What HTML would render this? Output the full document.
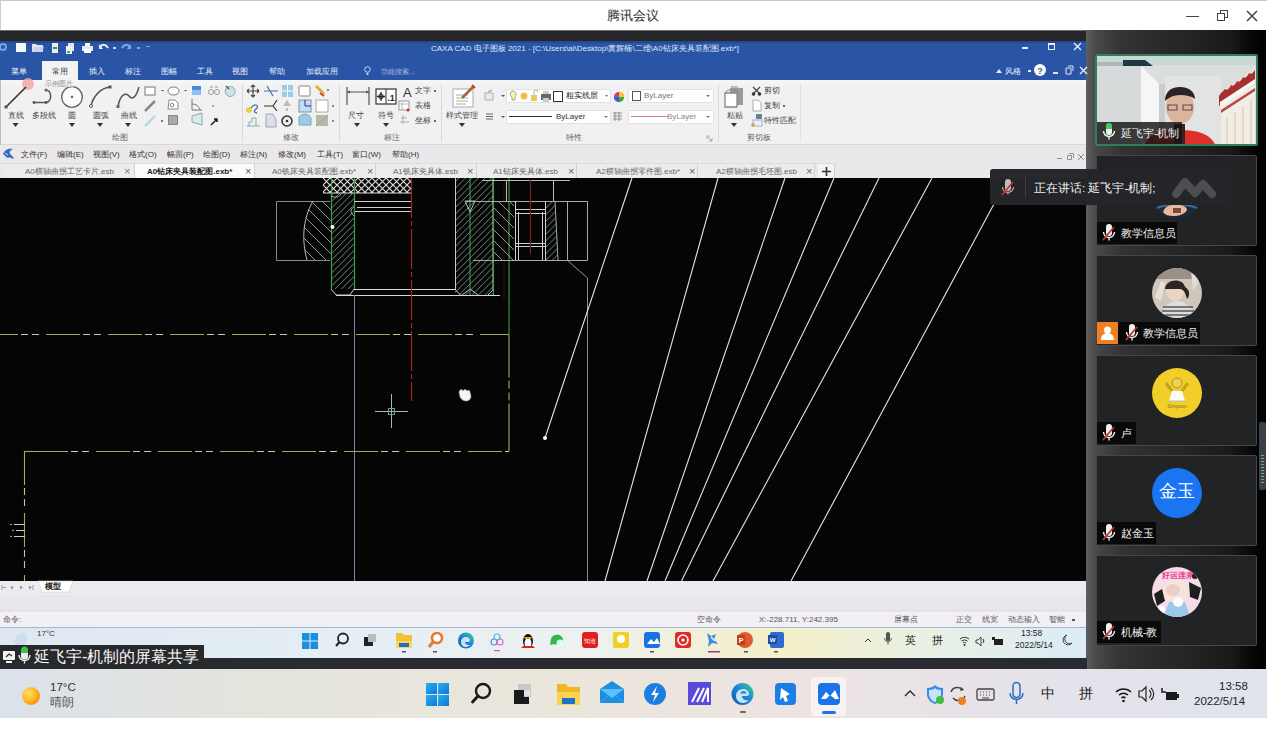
<!DOCTYPE html>
<html><head><meta charset="utf-8">
<style>
*{margin:0;padding:0;box-sizing:border-box}
html,body{width:1267px;height:729px;overflow:hidden;background:#fff;font-family:"Liberation Sans",sans-serif;position:relative}
.a{position:absolute}
.t{position:absolute;white-space:nowrap;line-height:1}
svg{position:absolute;overflow:visible}
#title{left:0;top:0;width:1267px;height:30px;background:#fff;border-top:1px solid #c8c8c8;border-left:1px solid #cfcfcf}
#darkbar{left:0;top:30px;width:1087px;height:11px;background:#262628;border-top:1px solid #6a6a6a}
#rpanel{left:1086px;top:30px;width:180px;height:639px;background:linear-gradient(90deg,#5e5e5e 0,#4a4a4a 5%,#333 20%,#272727 50%,#1a1a1a 80%,#060606 93%,#000 100%)}
#cad{left:0;top:41px;width:1086px;height:617px;background:#f1f1f1;overflow:hidden}
#cadtitle{left:0;top:0;width:1086px;height:39px;background:#2a55a6}
#ribbon{left:0;top:39px;width:1086px;height:65px;background:linear-gradient(180deg,#f7f8f8 0,#f1f1f1 6px,#f1f1f2 100%);border-bottom:1px solid #d8d8d8}
#menubar{left:0;top:104px;width:1086px;height:18px;background:#ebe8eb}
#doctabs{left:0;top:122px;width:1086px;height:15px;background:#ebe8eb}
#draw{left:0;top:137px;width:1086px;height:403px;background:#050505}
#modelbar{left:0;top:540px;width:1086px;height:14px;background:#ecebef}
#graybar{left:0;top:554px;width:1086px;height:17px;background:#e9e6ec}
#cmdline{left:0;top:571px;width:1086px;height:16px;background:#f2eff5;border-bottom:1px solid #9fbad3}
#smalltask{left:0;top:587px;width:1086px;height:30px;background:linear-gradient(90deg,#dde8f0 0,#e6eff6 35%,#eef1ee 55%,#f4efc8 72%,#e9f1e4 85%,#dcecf6 100%)}
#sharebar{left:0;top:658px;width:1087px;height:11px;background:#2a2b30}
#task{left:0;top:669px;width:1267px;height:49px;background:linear-gradient(90deg,#dbe2ea 0,#e4e4dc 20%,#ebe6dc 45%,#ede4e2 62%,#e6e2ea 80%,#dfe4ec 100%)}
.rt{font-size:8px;color:#444}
.wt{font-size:8px;color:#e8eefc}
.mt{font-size:8px;color:#333}
.tab{position:absolute;top:1px;height:14px;background:#ececec;border-right:1px solid #d0d0d0}
.tile{position:absolute;left:11px;width:161px;height:91px;background:#212325;border:1px solid #44474a;border-radius:2px}
.lab{position:absolute;left:0;bottom:0;height:22px;background:rgba(8,8,8,.9)}
.labt{position:absolute;top:5px;font-size:10.5px;color:#f0f0f0;white-space:nowrap;line-height:1}
</style></head><body>
<!-- Tencent meeting title -->
<div id="title" class="a">
  <div class="t" style="left:606px;top:8px;font-size:13px;color:#2b2b2b">腾讯会议</div>
  <div class="a" style="left:1185px;top:14.5px;width:13px;height:1.5px;background:#444"></div>
  <div class="a" style="left:1219px;top:9px;width:8px;height:8px;border:1.5px solid #444"></div>
  <div class="a" style="left:1216px;top:12px;width:8px;height:8px;border:1.5px solid #444;background:#fff"></div>
  <svg style="left:1246px;top:10px" width="10" height="10"><path d="M0 0L10 10M10 0L0 10" stroke="#444" stroke-width="1.5"/></svg>
</div>
<div id="darkbar" class="a"></div>
<div id="rpanel" class="a"></div>

<div id="cad" class="a">
  <div id="cadtitle" class="a"></div>
  <div id="ribbon" class="a"></div>
  <div id="menubar" class="a"></div>
  <div id="doctabs" class="a"></div>
  <div id="draw" class="a"></div>
  <div id="modelbar" class="a"></div>
  <div id="graybar" class="a"></div>
  <div id="cmdline" class="a"></div>
  <div id="smalltask" class="a"></div>
</div>
<div id="sharebar" class="a"></div>
<div id="task" class="a"></div>
<!-- CAD title bar -->
<div class="a" style="left:0;top:41px;width:1086px;height:2px;background:#24498f"></div>
<svg style="left:0;top:42px" width="10" height="10"><circle cx="3" cy="5" r="4" fill="#6aa8e8"/><circle cx="3" cy="5" r="2" fill="#2a55a6"/></svg>
<div class="a" style="left:16px;top:43px;width:10px;height:9px;background:#f4f6fa"></div>
<svg style="left:32px;top:43px" width="12" height="10"><path d="M0 1h4l1 1h6v7H0z" fill="#dfe6f2"/><path d="M2 4h10l-2 5H0z" fill="#c6d3ea"/></svg>
<div class="a" style="left:52px;top:43px;width:6px;height:10px;background:#e8eef8"></div>
<div class="a" style="left:53px;top:47px;width:4px;height:2px;background:#4a8a4a"></div>
<svg style="left:66px;top:43px" width="10" height="11"><path d="M2 0h6v8H2z" fill="#dfe6f2"/><path d="M0 3h6v8H0z" fill="#f0f4fa"/><path d="M1 8h3v2H1z" fill="#58a058"/></svg>
<svg style="left:82px;top:43px" width="11" height="10"><path d="M3 0h5v3H3z" fill="#f4f6fa"/><path d="M0 3h11v5H0z" fill="#e4eaf4"/><path d="M2 6h7v4H2z" fill="#fff"/></svg>
<svg style="left:99px;top:43px" width="10" height="9"><path d="M1 4C3 1 7 1 9 5" stroke="#e8eef8" stroke-width="2" fill="none"/><path d="M0 1v5h4z" fill="#e8eef8"/></svg>
<div class="a" style="left:113px;top:47px;width:3px;height:2px;background:#c8d4ea"></div>
<svg style="left:121px;top:43px" width="10" height="9"><path d="M9 4C7 1 3 1 1 5" stroke="#8ea6d4" stroke-width="2" fill="none"/><path d="M10 1v5H6z" fill="#8ea6d4"/></svg>
<div class="a" style="left:137px;top:47px;width:3px;height:2px;background:#8ea6d4"></div>
<div class="a" style="left:146px;top:46px;width:4px;height:1px;background:#8ea6d4"></div>
<div class="t wt" style="left:431px;top:45px;font-size:8px;color:#dfe7f6">CAXA CAD 电子图板 2021 - [C:\Users\ai\Desktop\黄辉楠\二维\A0钻床夹具装配图.exb*]</div>
<div class="a" style="left:1022px;top:47px;width:6px;height:2px;background:#e8eef8"></div>
<div class="a" style="left:1048px;top:43px;width:7px;height:7px;border:1px solid #e8eef8;border-top-width:2px"></div>
<svg style="left:1074px;top:43px" width="7" height="7"><path d="M0 0L7 7M7 0L0 7" stroke="#e8eef8" stroke-width="1.4"/></svg>
<!-- ribbon tabs -->
<div class="a" style="left:42px;top:61px;width:36px;height:19px;background:#f3f3f3"></div>
<div class="t wt" style="left:11px;top:68px">菜单</div>
<div class="t" style="left:52px;top:68px;font-size:8px;color:#3c3c3c">常用</div>
<div class="t wt" style="left:89px;top:68px">插入</div>
<div class="t wt" style="left:125px;top:68px">标注</div>
<div class="t wt" style="left:161px;top:68px">图幅</div>
<div class="t wt" style="left:197px;top:68px">工具</div>
<div class="t wt" style="left:232px;top:68px">视图</div>
<div class="t wt" style="left:269px;top:68px">帮助</div>
<div class="t wt" style="left:306px;top:68px">加载应用</div>
<svg style="left:364px;top:66px" width="7" height="10"><circle cx="3.5" cy="3.5" r="2.8" stroke="#c8d4ea" stroke-width="1" fill="none"/><path d="M2.5 7h2v2h-2z" fill="#c8d4ea"/></svg>
<div class="t" style="left:381px;top:68px;font-size:7px;color:#a9badd">功能搜索...</div>
<svg style="left:996px;top:69px" width="6" height="4"><path d="M0 4L3 0L6 4z" fill="#e8eef8"/></svg>
<div class="t wt" style="left:1005px;top:68px">风格</div>
<div class="a" style="left:1028px;top:70px;width:3px;height:2px;background:#e8eef8"></div>
<svg style="left:1034px;top:64px" width="12" height="12"><circle cx="6" cy="6" r="6" fill="#fafafa"/><text x="6" y="9.5" font-size="9" font-weight="bold" text-anchor="middle" fill="#5a5a5a" font-family="Liberation Sans">?</text></svg>
<div class="a" style="left:1053px;top:72px;width:5px;height:2px;background:#e0e8f6"></div>
<svg style="left:1066px;top:66px" width="7" height="8"><path d="M2 0h5v5M0 2h5v6H0z" stroke="#e0e8f6" stroke-width="1" fill="none"/></svg>
<svg style="left:1080px;top:67px" width="7" height="7"><path d="M0 0L7 7M7 0L0 7" stroke="#e8eef8" stroke-width="1.4"/></svg>
<!-- ribbon -->
<div class="a" style="left:0;top:80px;width:1px;height:65px;background:#bdbdbd"></div>
<!-- drawing big tools -->
<svg style="left:0;top:78px" width="140" height="35">
 <circle cx="28" cy="6" r="6" fill="#f4a8a8" opacity=".85"/>
 <path d="M6 29L26 9" stroke="#333" stroke-width="1.6"/><rect x="4.5" y="27.5" width="3" height="3" fill="#555"/>
 <path d="M33 24.5H47M47 24.5C52 22 52 13 46 12" stroke="#555" stroke-width="1.5" fill="none"/><circle cx="34" cy="24.5" r="1.4" fill="#555"/><circle cx="46" cy="24.5" r="1.4" fill="#555"/><circle cx="46" cy="12" r="1.6" fill="#666"/>
 <circle cx="72" cy="19" r="10.3" stroke="#666" stroke-width="1.3" fill="#fafafa"/><circle cx="72" cy="19" r="1.2" fill="#666"/>
 <path d="M91 28C93 18 101 10 110 9" stroke="#555" stroke-width="1.5" fill="none"/><circle cx="91" cy="28" r="1.5" stroke="#555" fill="#fff"/><rect x="108.5" y="7.5" width="3" height="3" fill="#555"/>
 <path d="M118 29C120 16 126 14 129 18C132 22 136 20 139 9" stroke="#555" stroke-width="1.5" fill="none"/><rect x="116.5" y="27" width="3" height="3" fill="#666"/>
</svg>
<div class="t" style="left:45px;top:80px;font-size:7px;color:#888;background:rgba(245,245,245,.7)">示例图片</div>
<div class="t rt" style="left:8px;top:112px">直线</div>
<div class="t rt" style="left:32px;top:112px">多段线</div>
<div class="t rt" style="left:68px;top:112px">圆</div>
<div class="t rt" style="left:93px;top:112px">圆弧</div>
<div class="t rt" style="left:121px;top:112px">曲线</div>
<svg style="left:0;top:123px" width="140" height="5"><path d="M12.5 0h6l-3 4z M69 0h6l-3 4z M97 0h6l-3 4z M125 0h6l-3 4z" fill="#333"/></svg>
<!-- small draw icons -->
<svg style="left:140px;top:84px" width="100" height="42">
 <rect x="5" y="3" width="10" height="8" stroke="#777" fill="#fff"/><path d="M21 6h3l-1.5 1.5z" fill="#555"/>
 <ellipse cx="33.5" cy="7" rx="5.5" ry="4" stroke="#777" fill="#fff"/><path d="M44 6h3l-1.5 1.5z" fill="#555"/>
 <rect x="52" y="2" width="9" height="9" fill="#4a8ad8"/><rect x="52" y="6" width="9" height="5" fill="#8cc0f0"/>
 <circle cx="71" cy="8" r="2.5" stroke="#999" fill="none"/><circle cx="77" cy="8" r="2.5" stroke="#999" fill="none"/><path d="M70 3h3M75 3h3" stroke="#999"/>
 <path d="M88 3a5 5 0 1 1 0 9a5 5 0 0 1 0-9z" stroke="#8aa" fill="#cfe0ea"/><path d="M86 2l3 3" stroke="#556" stroke-width="1.5"/>
 <path d="M5 27L15 17" stroke="#888" stroke-width="2.5"/>
 <path d="M29 16h6l3 3v6H28z" stroke="#888" fill="#fff"/><circle cx="32" cy="21" r="1.8" stroke="#888" fill="none"/>
 <path d="M52 15v11h10M52 20c4 0 7 2 8 6" stroke="#777" fill="none"/><circle cx="73" cy="22" r="1" fill="#888"/>
 <path d="M5 42L15 32" stroke="#a9d4ee" stroke-width="1.8"/><circle cx="22" cy="37" r="1" fill="#555"/>
 <rect x="28" y="31" width="10" height="10" fill="#888"/><rect x="29" y="32" width="8" height="8" fill="#a8a8a8"/>
 <path d="M52 32l10-3v12l-10-3z" stroke="#8aa" fill="#dbe8f0"/>
 <path d="M71 41l6-6M74 35h3v3" stroke="#222" stroke-width="1.5"/>
</svg>
<div class="a" style="left:242px;top:84px;width:1px;height:58px;background:#dadada"></div>
<div class="t rt" style="left:112px;top:134px;color:#666">绘图</div>
<!-- modify group -->
<svg style="left:245px;top:84px" width="95" height="44">
 <path d="M8 1v12M2 7h12M8 1l-2 2M8 1l2 2M8 13l-2-2M8 13l2-2M2 7l2-2M2 7l2 2M14 7l-2-2M14 7l-2 2" stroke="#444" stroke-width="1.1" fill="none"/>
 <path d="M19 7h14M22 2l6 10" stroke="#3a6fb0" stroke-width="1.2"/>
 <rect x="37" y="1" width="11" height="12" fill="#9ccbe8"/><path d="M42.5 1v12M37 7h11" stroke="#fff"/>
 <rect x="54" y="2" width="11" height="10" stroke="#888" fill="#fff" rx="1"/>
 <path d="M71 2l8 8" stroke="#e0b030" stroke-width="3"/><path d="M75 9l4 3" stroke="#c44" stroke-width="2"/><circle cx="83" cy="6" r="1" fill="#666"/>
 <circle cx="4" cy="26" r="3" fill="#e8d040"/><path d="M6 24c4-6 8-2 6 0s-5 4 0 5" stroke="#3a6fb0" stroke-width="1.3" fill="none"/>
 <path d="M19 22h9l4-6M28 22l4 5" stroke="#333" stroke-width="1.2" fill="none"/>
 <path d="M42 16l4 6h-8z" fill="#bbb"/><path d="M42 24v3" stroke="#888"/>
 <rect x="54" y="16" width="12" height="12" fill="#bfe0f0" stroke="#88b"/><path d="M60 16v6h6" stroke="#336" fill="none"/>
 <rect x="71" y="16" width="12" height="12" stroke="#aaa" fill="#fff"/><circle cx="88" cy="22" r="1" fill="#666"/>
 <path d="M2 42h13M4 42v-4h3v-4h4v8" stroke="#8aa" fill="none"/>
 <path d="M21 30h7l3 6v7H21z" stroke="#9aa" fill="#dde"/>
 <circle cx="42" cy="37" r="5" stroke="#333" stroke-width="1.5" fill="none"/><circle cx="42" cy="37" r="1.3" fill="#333"/>
 <path d="M54 33c3-4 10-4 12 1v7H54z" fill="#9ccbe8" stroke="#7ab"/>
 <rect x="71" y="31" width="12" height="11" fill="#b8b8a8"/><path d="M71 42l12-11" stroke="#8a8"/><circle cx="88" cy="37" r="1" fill="#666"/>
</svg>
<div class="t rt" style="left:283px;top:134px;color:#666">修改</div>
<div class="a" style="left:339px;top:84px;width:1px;height:58px;background:#dadada"></div>
<!-- annotate group -->
<svg style="left:340px;top:84px" width="100" height="44">
 <path d="M7 3v18M29 3v18M7 8h22" stroke="#555" stroke-width="1.2"/><path d="M7 8l3-1.5v3zM29 8l-3-1.5v3z" fill="#555"/>
 <rect x="36" y="5" width="20" height="15" stroke="#333" stroke-width="1.2" fill="#fff"/><path d="M46 5v15" stroke="#333"/>
 <path d="M41 8v9M37 12.5h8" stroke="#222" stroke-width="1.3"/><circle cx="41" cy="12.5" r="2.3" stroke="#222" fill="none"/>
 <text x="51" y="17" font-size="9" font-weight="bold" text-anchor="middle" fill="#222" font-family="Liberation Sans">.1</text>
 <text x="63" y="13" font-size="13" fill="#333" font-family="Liberation Sans">A</text>
 <rect x="59" y="17" width="10" height="9" stroke="#999" fill="#fff"/><path d="M59 20h10M62 17v9" stroke="#bbb"/><circle cx="68" cy="26" r="1.5" fill="#d22"/>
 <path d="M60 38h9M63 31v9M61 34h6" stroke="#aab" stroke-width="1"/>
</svg>
<div class="t rt" style="left:348px;top:112px">尺寸</div>
<div class="t rt" style="left:378px;top:112px">符号</div>
<div class="t rt" style="left:415px;top:87px">文字</div><div class="a" style="left:434px;top:90px;width:2px;height:2px;background:#666"></div>
<div class="t rt" style="left:415px;top:102px">表格</div>
<div class="t rt" style="left:415px;top:117px">坐标</div><div class="a" style="left:434px;top:120px;width:2px;height:2px;background:#666"></div>
<svg style="left:340px;top:123px" width="60" height="5"><path d="M14 0h6l-3 4z M43 0h6l-3 4z" fill="#333"/></svg>
<div class="t rt" style="left:384px;top:134px;color:#666">标注</div>
<div class="a" style="left:441px;top:84px;width:1px;height:58px;background:#dadada"></div>
<!-- properties group -->
<svg style="left:450px;top:84px" width="30" height="26">
 <rect x="3" y="5" width="20" height="18" stroke="#aaa" fill="#fff"/><path d="M6 11h12M6 14h12M6 17h12M6 20h10" stroke="#999" stroke-width=".8"/>
 <path d="M12 14L24 2" stroke="#a06a30" stroke-width="2.5"/><path d="M22 1l3 3" stroke="#d34" stroke-width="2"/>
</svg>
<div class="t rt" style="left:446px;top:112px">样式管理</div>
<svg style="left:459px;top:123px" width="7" height="5"><path d="M0 0h6l-3 4z" fill="#333"/></svg>
<svg style="left:482px;top:90px" width="24" height="12"><path d="M3 3h8v7H3z" stroke="#aab" fill="#e8ecf0"/><path d="M6 2l4-2" stroke="#888"/><path d="M19 5h4l-2 2z" fill="#555"/></svg>
<div class="a" style="left:506px;top:89px;width:105px;height:14px;background:#fff;border:1px solid #e2e2e2"></div>
<svg style="left:508px;top:90px" width="100" height="13">
 <path d="M4 1a3.5 3.5 0 0 1 3 6v3H4V7A3.5 3.5 0 0 1 4 1z" stroke="#9a6" fill="#f4f4c8"/>
 <circle cx="16" cy="6" r="3.5" fill="#f0c040"/>
 <path d="M23 5h6v6h-6z" fill="#e8c860"/><path d="M26 5V2a2 2 0 0 1 4 0" stroke="#aaa" fill="none"/>
 <path d="M33 4h10v6H33z" fill="#667"/><path d="M35 1h6v3h-6zM35 8h6v4h-6z" fill="#ccc"/>
 <rect x="45.5" y="1.5" width="9" height="10" stroke="#333" fill="#fff"/>
 <path d="M97 5h3l-1.5 2z" fill="#777"/>
</svg>
<div class="t" style="left:566px;top:92px;font-size:8px;color:#222">粗实线层</div>
<svg style="left:614px;top:92px" width="10" height="10"><circle cx="5" cy="5" r="5" fill="#e03030"/><path d="M5 5L5 0A5 5 0 0 1 10 5z" fill="#f0d020"/><path d="M5 5L10 5A5 5 0 0 1 5 10z" fill="#30b040"/><path d="M5 5L5 10A5 5 0 0 1 0 5z" fill="#3060e0"/><path d="M5 5L0 5A5 5 0 0 1 2 1z" fill="#c040c0"/></svg>
<div class="a" style="left:628px;top:89px;width:86px;height:14px;background:#fff;border:1px solid #e2e2e2"></div>
<div class="a" style="left:632px;top:91px;width:9px;height:10px;border:1px solid #555;background:#fff"></div>
<div class="t" style="left:644px;top:92px;font-size:8px;color:#777">ByLayer</div>
<svg style="left:706px;top:95px" width="4" height="3"><path d="M0 0h4l-2 2z" fill="#777"/></svg>
<svg style="left:486px;top:113px" width="20" height="8"><path d="M0 1h7M0 3.5h7M0 6h7" stroke="#666"/><path d="M15 3h4l-2 2z" fill="#555"/></svg>
<div class="a" style="left:506px;top:110px;width:105px;height:14px;background:#fff;border:1px solid #e2e2e2"></div>
<div class="a" style="left:509px;top:116px;width:43px;height:1px;background:#333"></div>
<div class="t" style="left:556px;top:113px;font-size:8px;color:#333">ByLayer</div>
<svg style="left:604px;top:116px" width="4" height="3"><path d="M0 0h4l-2 2z" fill="#777"/></svg>
<svg style="left:613px;top:112px" width="9" height="9"><path d="M0 1h9M0 4h9M0 7h9M2 0v9M6 0v9" stroke="#888" stroke-width=".9"/></svg>
<div class="a" style="left:628px;top:110px;width:86px;height:14px;background:#fff;border:1px solid #e2e2e2"></div>
<div class="a" style="left:631px;top:116px;width:37px;height:1px;background:#d08080"></div>
<div class="t" style="left:667px;top:113px;font-size:8px;color:#888">ByLayer</div>
<svg style="left:706px;top:116px" width="4" height="3"><path d="M0 0h4l-2 2z" fill="#777"/></svg>
<div class="t rt" style="left:566px;top:134px;color:#666">特性</div>
<svg style="left:707px;top:136px" width="5" height="5"><path d="M0 0h3M0 0v3M1 1l4 4M5 2v3H2" stroke="#999" stroke-width=".8" fill="none"/></svg>
<div class="a" style="left:718px;top:84px;width:1px;height:58px;background:#dadada"></div>
<!-- clipboard -->
<svg style="left:722px;top:85px" width="80" height="42">
 <path d="M8 3h13v17H8z" fill="#999"/><path d="M9 1h6l2 2H9z" fill="#bbb"/>
 <path d="M3 8h12v14H3z" stroke="#888" stroke-width="1.3" fill="#fff"/><path d="M3 8l3-3h9" stroke="#888" fill="none"/>
 <path d="M31 2l7 7M38 2l-7 7" stroke="#444" stroke-width="1.2"/><circle cx="31.5" cy="9" r="1.8" fill="#333"/><circle cx="37.5" cy="9" r="1.8" fill="#333"/>
 <path d="M31 15h5l3 3v8h-8z" stroke="#aaa" fill="#fff"/>
 <rect x="34" y="29" width="6" height="5" fill="#5a8a8a"/><rect x="31" y="35" width="9" height="6" stroke="#aac" fill="#eef"/><circle cx="31" cy="40" r="1.8" fill="#e0a030"/>
</svg>
<div class="t rt" style="left:727px;top:112px">粘贴</div>
<svg style="left:731px;top:123px" width="7" height="5"><path d="M0 0h6l-3 4z" fill="#333"/></svg>
<div class="t rt" style="left:764px;top:87px">剪切</div>
<div class="t rt" style="left:764px;top:102px">复制</div><div class="a" style="left:783px;top:105px;width:2px;height:2px;background:#666"></div>
<div class="t rt" style="left:764px;top:117px">特性匹配</div>
<div class="t rt" style="left:747px;top:134px;color:#666">剪切板</div>
<div class="a" style="left:800px;top:84px;width:1px;height:58px;background:#e2e2e2"></div>
<!-- menu bar -->
<svg style="left:2px;top:148px" width="13" height="12"><path d="M1 6c2-5 6-6 10-5c-3 1-4 3-3 5c2 1 3 3 4 5c-3-1-5-2-7-1c-1-2-3-3-4-4z" fill="#2f6ec0"/><path d="M3 5l3 2" stroke="#fff" stroke-width=".8"/></svg>
<div class="t mt" style="left:21px;top:151px">文件(F)</div>
<div class="t mt" style="left:57px;top:151px">编辑(E)</div>
<div class="t mt" style="left:93px;top:151px">视图(V)</div>
<div class="t mt" style="left:129px;top:151px">格式(O)</div>
<div class="t mt" style="left:167px;top:151px">幅面(P)</div>
<div class="t mt" style="left:203px;top:151px">绘图(D)</div>
<div class="t mt" style="left:240px;top:151px">标注(N)</div>
<div class="t mt" style="left:278px;top:151px">修改(M)</div>
<div class="t mt" style="left:317px;top:151px">工具(T)</div>
<div class="t mt" style="left:352px;top:151px">窗口(W)</div>
<div class="t mt" style="left:392px;top:151px">帮助(H)</div>
<div class="a" style="left:1057px;top:158px;width:5px;height:1px;background:#888"></div>
<svg style="left:1067px;top:153px" width="7" height="7"><path d="M2 0.5h4.5v4.5M0.5 2.5h4v4h-4z" stroke="#888" stroke-width=".9" fill="none"/></svg>
<svg style="left:1078px;top:154px" width="6" height="6"><path d="M0 0L6 6M6 0L0 6" stroke="#888" stroke-width="1"/></svg>
<!-- doc tabs -->
<div class="a" style="left:0;top:163px;width:836px;height:1px;background:#dcdcdc"></div>
<div class="tab" style="left:5px;top:164px;width:130px"></div>
<div class="tab" style="left:135px;top:164px;width:120px;background:#fbfbfb"></div>
<div class="tab" style="left:255px;top:164px;width:121px"></div>
<div class="tab" style="left:376px;top:164px;width:101px"></div>
<div class="tab" style="left:477px;top:164px;width:100px"></div>
<div class="tab" style="left:577px;top:164px;width:121px"></div>
<div class="tab" style="left:698px;top:164px;width:117px"></div>
<div class="tab" style="left:818px;top:164px;width:17px;background:#f4f4f4"></div>
<div class="t" style="left:25px;top:168px;font-size:8px;color:#666">A0横轴曲拐工艺卡片.esb</div>
<div class="t" style="left:124px;top:166px;font-size:11px;color:#777">×</div>
<div class="t" style="left:147px;top:168px;font-size:8px;color:#222;font-weight:bold">A0钻床夹具装配图.exb*</div>
<div class="t" style="left:245px;top:166px;font-size:11px;color:#555">×</div>
<div class="t" style="left:272px;top:168px;font-size:8px;color:#666">A0铣床夹具装配图.exb*</div>
<div class="t" style="left:367px;top:166px;font-size:11px;color:#666">×</div>
<div class="t" style="left:393px;top:168px;font-size:8px;color:#666">A1铣床夹具体.esb</div>
<div class="t" style="left:467px;top:166px;font-size:11px;color:#666">×</div>
<div class="t" style="left:493px;top:168px;font-size:8px;color:#666">A1钻床夹具体.esb</div>
<div class="t" style="left:568px;top:166px;font-size:11px;color:#666">×</div>
<div class="t" style="left:596px;top:168px;font-size:8px;color:#666">A2横轴曲拐零件图.exb*</div>
<div class="t" style="left:689px;top:166px;font-size:11px;color:#666">×</div>
<div class="t" style="left:716px;top:168px;font-size:8px;color:#666">A2横轴曲拐毛坯图.esb</div>
<div class="t" style="left:806px;top:166px;font-size:11px;color:#666">×</div>
<svg style="left:821px;top:166px" width="11" height="11"><path d="M5.5 1v9M1 5.5h9" stroke="#333" stroke-width="1.6"/></svg>
<!-- drawing -->
<svg style="left:0;top:178px" width="1086" height="403">
<defs>
 <pattern id="knurl" width="7" height="7" patternUnits="userSpaceOnUse" x="323" y="178"><path d="M0 0L7 7M7 0L0 7" stroke="#dadada" stroke-width="1.2"/></pattern>
 <pattern id="hA" width="6.5" height="6.5" patternUnits="userSpaceOnUse"><path d="M0 6.5L6.5 0M-1 1L1 -1M5.5 7.5L7.5 5.5" stroke="#7a9a8c" stroke-width=".9"/></pattern>
 <pattern id="hB" width="11" height="11" patternUnits="userSpaceOnUse"><path d="M0 0L11 11M-1 10L1 12M10 -1L12 1" stroke="#a0a8a8" stroke-width=".9"/></pattern>
</defs>
<g transform="translate(0,-178)" fill="none">
 <!-- knurled band -->
 <rect x="323" y="178" width="89" height="15" fill="url(#knurl)"/>
 <path d="M323 193H412" stroke="#ddd" stroke-width="1"/>
 <!-- left outer rect -->
 <path d="M276.5 201.5H330M276.5 201.5V260.5H330" stroke="#8a8a8a" stroke-width="1"/>
 <path d="M313 201C302 220 302 242 307 260" stroke="#bbb" stroke-width="1"/>
 <clipPath id="c1"><path d="M313 201C302 220 302 242 307 260H331V201z"/></clipPath>
 <rect x="300" y="201" width="31" height="59" fill="url(#hB)" clip-path="url(#c1)"/>
 <!-- left hatched sleeve -->
 <rect x="331" y="193" width="23" height="96" fill="url(#hA)"/>
 <path d="M331 289l5 6h14l4-6" fill="#050505"/>
 <path d="M331 289l5 6h14l4-6" stroke="#cfcfcf"/>
 <path d="M331.5 178V289M354.5 178V290" stroke="#3aa04a" stroke-width="1.2"/>
 <path d="M331 196c6 3 10 0 10-3M354 207c-4 2-4 6 0 9" stroke="#ccc" stroke-width=".8"/>
 <!-- inner horizontal -->
 <path d="M354 201.5H412M357 207.5H412M355 211.5H412" stroke="#d0d0d0" stroke-width="1"/>
 <path d="M354 289.5H455M336 295.5H500" stroke="#d8d8d8" stroke-width="1"/>
 <!-- right hatched sleeve -->
 <rect x="455" y="178" width="38" height="117" fill="url(#hA)"/>
 <path d="M455.5 178V290l5 5M493 178V290l-5 5M462 295l8-6l8 6" stroke="#c8c8c8" stroke-width="1"/>
 <path d="M470 178V295M493.5 178V295" stroke="#3aa04a" stroke-width="1.1"/>
 <path d="M465 201h10l-5 11z" stroke="#ccc" stroke-width=".9"/>
 <path d="M509 178V334" stroke="#3aa04a" stroke-width="1.1"/>
 <path d="M504 180V300" stroke="#2a1616" stroke-width="1"/>
 <!-- right assembly -->
 <path d="M482 180.5H570M506.5 180V201M553.5 180V201" stroke="#bbb" stroke-width="1"/>
 <path d="M465 201.5H587.5V260.5H473" stroke="#a8a8a8" stroke-width="1"/>
 <clipPath id="c2"><rect x="494" y="201" width="20" height="59"/></clipPath>
 <rect x="494" y="201" width="20" height="59" fill="url(#hB)" clip-path="url(#c2)"/>
 <path d="M515.5 201V260M518.5 212V260M542.5 212V260M545.5 201V260M515 209.5H545M515 213.5H545M515 243.5H545M515 246.5H545" stroke="#cfcfcf" stroke-width="1"/>
 <clipPath id="c3"><path d="M546 201h9l3 59h-12z"/></clipPath>
 <rect x="546" y="201" width="12" height="59" fill="url(#hA)" clip-path="url(#c3)"/>
 <path d="M555 201L558 260M567.5 201V260" stroke="#aaa" stroke-width="1"/>
 <path d="M530.5 180V254" stroke="#7a2020" stroke-width="1.2"/>
 <path d="M567 260L587.5 278V581" stroke="#909090" stroke-width="1"/>
 <!-- red centre line -->
 <path d="M411.5 178V401" stroke="#a82424" stroke-width="1.2" stroke-dasharray="40 3 5 3"/>
 <!-- yellow centre lines -->
 <path d="M0 334.5H509" stroke="#a8a85a" stroke-width="1.1" stroke-dasharray="34 28" stroke-dashoffset="16"/><path d="M0 334.5H509" stroke="#c8c8b0" stroke-width="1.1" stroke-dasharray="0 37 7 4 7 7" stroke-dashoffset="16"/>
 <path d="M24.5 451.5H509" stroke="#a8a85a" stroke-width="1.1" stroke-dasharray="34 28" stroke-dashoffset="52.5"/><path d="M24.5 451.5H509" stroke="#c8c8b0" stroke-width="1.1" stroke-dasharray="0 37 7 4 7 7" stroke-dashoffset="52.5"/>
 <path d="M25 451.5H35" stroke="#a8a85a" stroke-width="1.1"/>
 <path d="M24.5 451V581" stroke="#a8a85a" stroke-width="1.1" stroke-dasharray="34 28" stroke-dashoffset="0"/><path d="M24.5 451V581" stroke="#c8c8b0" stroke-width="1.1" stroke-dasharray="0 37 7 4 7 7" stroke-dashoffset="0"/>
 <path d="M509 334.5V451.5" stroke="#a8a85a" stroke-width="1.1" stroke-dasharray="43 3 8 4 8 3 60"/>
 <path d="M14 524.5H25M16 530.5H25M14 536.5H25" stroke="#ccc" stroke-width="1.2"/>
 <circle cx="11" cy="524.5" r=".8" fill="#ccc"/><circle cx="13" cy="530.5" r=".8" fill="#ccc"/><circle cx="11" cy="536.5" r=".8" fill="#ccc"/>
 <!-- blue-gray vertical -->
 <path d="M354.5 295V581" stroke="#7888a0" stroke-width="1"/>
 <!-- diagonal lines -->
 <g stroke="#e6e6e6" stroke-width="1.1">
  <path d="M632 178L545 438"/>
  <path d="M718 178L605 581"/>
  <path d="M785 178L647 581"/>
  <path d="M834 178L665 581"/>
  <path d="M879 178L681.5 581"/>
  <path d="M932 178L713 581"/>
  <path d="M1008 178L791 581"/>
 </g>
 <circle cx="545" cy="438" r="2" fill="#fff"/>
 <circle cx="332.5" cy="227" r="2" fill="#fff"/>
 <!-- crosshair -->
 <path d="M375 411.5H408M391.5 394V428" stroke="#aab8b0" stroke-width="1"/>
 <rect x="388.5" y="408.5" width="6" height="6" stroke="#6aa090" stroke-width="1"/>
 <!-- hand cursor -->
 <path d="M459 392c1-3 3-3 4-1c1-2 3-2 4 0c1-1 3-1 3 1l1 4c0 3-2 5-5 5c-3 0-5-2-6-4z" fill="#f4f4f4" stroke="#999" stroke-width=".6"/>
</g>
</svg>
<!-- model bar -->
<svg style="left:0;top:583px" width="40" height="9"><path d="M2 2v5M6 4.5l-3 0" stroke="#888" stroke-width=".8"/><path d="M13 2.5l-3 2l3 2z M20 2.5l3 2l-3 2z M29 2.5l3 2l-3 2z" fill="#999"/><path d="M33 2v5" stroke="#999"/></svg>
<svg style="left:38px;top:581px" width="36" height="12"><path d="M0 0h35l-4 11H4z" fill="#fff" stroke="#d0d0d0" stroke-width=".6"/></svg>
<div class="t" style="left:45px;top:583px;font-size:8px;color:#222;font-weight:bold">模型</div>
<div class="a" style="left:0;top:610px;width:1086px;height:1px;background:#e0dde3"></div>
<div class="t" style="left:3px;top:616px;font-size:8px;color:#555">命令:</div>
<div class="t" style="left:697px;top:616px;font-size:8px;color:#555">空命令</div>
<div class="t" style="left:759px;top:616px;font-size:8px;color:#555">X:-228.711, Y:242.395</div>
<div class="t" style="left:894px;top:616px;font-size:8px;color:#555">屏幕点</div>
<div class="t" style="left:956px;top:616px;font-size:8px;color:#555">正交</div>
<div class="t" style="left:982px;top:616px;font-size:8px;color:#555">线宽</div>
<div class="t" style="left:1008px;top:616px;font-size:8px;color:#555">动态输入</div>
<div class="t" style="left:1049px;top:616px;font-size:8px;color:#555">智能</div>
<div class="a" style="left:1072px;top:619px;width:3px;height:2px;background:#555"></div>
<!-- small windows taskbar icons -->
<svg style="left:12px;top:630px" width="30" height="18"><path d="M6 5l6-3l4 6l-4 8H5l-3-6z" fill="#c8dcee" opacity=".8"/></svg>
<div class="t" style="left:37px;top:630px;font-size:8px;color:#333">17°C</div>
<svg style="left:0;top:629px" width="1086" height="26">
 <g transform="translate(0,-629)">
 <rect x="302" y="633" width="7.5" height="7.5" fill="#1a8ee0"/><rect x="310.5" y="633" width="7.5" height="7.5" fill="#1a8ee0"/><rect x="302" y="641.5" width="7.5" height="7.5" fill="#1a8ee0"/><rect x="310.5" y="641.5" width="7.5" height="7.5" fill="#1a8ee0"/>
 <circle cx="343" cy="638.5" r="5" stroke="#222" stroke-width="1.8" fill="none"/><path d="M339.5 642l-3.5 4" stroke="#222" stroke-width="2"/>
 <rect x="364" y="637" width="9" height="9" fill="#222"/><rect x="368" y="634" width="8" height="8" fill="#bbb"/><rect x="364" y="637" width="4" height="9" fill="#222"/><rect x="364" y="642" width="9" height="4" fill="#222"/>
 <path d="M396 633h6l2 2h8v13h-16z" fill="#f2c030"/><rect x="396" y="641" width="16" height="7" fill="#f8d860"/><rect x="399" y="643" width="10" height="4" fill="#1f6fc8"/><rect x="402" y="651" width="4" height="1.5" fill="#555"/>
 <circle cx="437" cy="638" r="5" stroke="#e8782a" stroke-width="2.6" fill="#fff"/><path d="M433 642l-4 5" stroke="#e8782a" stroke-width="3"/><rect x="433" y="651" width="4" height="1.5" fill="#555"/>
 <circle cx="466" cy="640.5" r="8" fill="url(#edg)"/><path d="M461 642c0-3 2-5 5-5c2 0 4 1.5 4 3.5c0 .7-.7 1.4-2 1.4h-3c0 2 2 3.5 5 3c-1.4 1.4-3 2-4.3 2c-3 0-4.7-2-4.7-5z" fill="#e8f4fc" opacity=".85"/>
 <circle cx="494" cy="642" r="3" stroke="#6a8ae0" stroke-width="1.2" fill="none"/><circle cx="500" cy="642" r="3" stroke="#e06ab0" stroke-width="1.2" fill="none"/><circle cx="497" cy="637" r="3" stroke="#5ab0e0" stroke-width="1.2" fill="none"/><rect x="494" y="650" width="6" height="1.2" fill="#d060a0"/>
 <ellipse cx="528" cy="641" rx="5" ry="7" fill="#111"/><ellipse cx="528" cy="643" rx="3.4" ry="4.5" fill="#fff"/><path d="M524 637h8l-1 2h-6z" fill="#e0a020"/><path d="M523 646l-2 2h14l-2-2z" fill="#d22"/>
 <path d="M551 639a6 5 0 1 1 3 5l-4 1z" fill="#32b450"/><circle cx="560" cy="643" r="3.5" fill="#dfe"/>
 <rect x="582" y="632" width="16" height="16" rx="3" fill="#e02020"/><text x="590" y="643" font-size="6" fill="#fff" text-anchor="middle" font-family="Liberation Sans">知道</text>
 <rect x="613" y="632" width="16" height="16" rx="2" fill="#f0d020"/><circle cx="621" cy="639" r="4" fill="#fff"/>
 <rect x="644" y="632" width="16" height="16" rx="3" fill="#1a73e0"/><path d="M647 644l4-5l3 3l3-4l3 6z" fill="#fff"/><rect x="650" y="651" width="4" height="1.5" fill="#555"/>
 <rect x="675" y="632" width="16" height="16" rx="3" fill="#e02a2a"/><circle cx="683" cy="640" r="5" stroke="#fff" stroke-width="1.6" fill="none"/><circle cx="683" cy="640" r="1.6" fill="#fff"/>
 <path d="M707 633l4 3l5-2l-2 5l4 5l-6-1l-4 4l1-6z" fill="#3a8ae0"/><path d="M711 637l4 4" stroke="#f4f4f4" stroke-width="1.4"/><rect x="708" y="651" width="12" height="1.5" fill="#9a3aa0"/>
 <circle cx="745" cy="640" r="8" fill="#e05a30"/><rect x="737" y="635" width="8" height="10" fill="#c0401e"/><text x="741" y="643" font-size="7" fill="#fff" text-anchor="middle" font-weight="bold" font-family="Liberation Sans">P</text><rect x="744" y="651" width="4" height="1.5" fill="#555"/>
 <rect x="770" y="632" width="14" height="16" rx="2" fill="#2b6cd0"/><rect x="768" y="635" width="9" height="9" fill="#1a4fa8"/><text x="772.5" y="642" font-size="6" fill="#fff" text-anchor="middle" font-weight="bold" font-family="Liberation Sans">W</text><rect x="774" y="651" width="4" height="1.5" fill="#555"/>
 <path d="M865 642l3-3l3 3" stroke="#333" stroke-width="1" fill="none"/>
 <path d="M886 634a2 2 0 0 1 4 0v5a2 2 0 0 1-4 0z" fill="#555"/><path d="M884.5 638a3.5 3.5 0 0 0 7 0M888 641.5v3" stroke="#555" fill="none"/>
 </g>
</svg>
<div class="t" style="left:905px;top:635px;font-size:11px;color:#222">英</div>
<div class="t" style="left:932px;top:635px;font-size:11px;color:#222">拼</div>
<svg style="left:958px;top:635px" width="50" height="12">
 <path d="M2 4a7 7 0 0 1 9 0M3.5 6a5 5 0 0 1 6 0M5 8a2.5 2.5 0 0 1 3 0" stroke="#333" stroke-width="1" fill="none"/><circle cx="6.5" cy="10" r="1" fill="#333"/>
 <path d="M18 5h2l3-3v9l-3-3h-2z" stroke="#333" stroke-width=".9" fill="none"/><path d="M25 4a3 3 0 0 1 0 4" stroke="#333" fill="none"/>
 <rect x="36" y="4" width="9" height="6" fill="#222"/><rect x="34" y="2" width="3" height="3" fill="#222"/>
</svg>
<div class="t" style="left:1021px;top:629px;font-size:8.5px;color:#222">13:58</div>
<div class="t" style="left:1015px;top:641px;font-size:8.5px;color:#222">2022/5/14</div>
<svg style="left:1063px;top:634px" width="10" height="11"><path d="M4 1a5 5 0 1 0 5 8a4 4 0 0 1-5-8z" stroke="#444" stroke-width="1" fill="none"/></svg>
<!-- share label -->
<div class="a" style="left:0;top:645px;width:204px;height:24px;background:#28292d"></div>
<svg style="left:2px;top:649px" width="32" height="17">
 <rect x="1" y="2" width="12" height="9" rx="1" fill="#f4f4f4"/><path d="M4 8l3-3l3 2" stroke="#28292d" stroke-width="1.3" fill="none"/><rect x="4" y="12" width="6" height="2" fill="#f4f4f4"/>
 <path d="M19 1a3.5 3.5 0 0 1 7 0v6a3.5 3.5 0 0 1-7 0z" fill="#3cc050"/><path d="M17 6a5.5 5.5 0 0 0 11 0M22.5 11.5v3" stroke="#f0f0f0" stroke-width="1.4" fill="none"/><path d="M19 4h7v3a3.5 3.5 0 0 1-7 0z" fill="#eaeaea"/>
</svg>
<div class="t" style="left:34px;top:649px;font-size:16px;color:#f8f8f8;font-weight:500">延飞宇-机制的屏幕共享</div>
<!-- right panel tiles -->

<div class="a" style="left:1095px;top:54px;width:163px;height:92px;border:2px solid #2f7f5a;background:#d8dcdc;overflow:hidden;border-radius:2px">
 <svg style="left:0;top:0" width="159" height="88">
  <rect width="159" height="88" fill="#dcdede"/>
  <rect x="0" y="0" width="159" height="9" fill="#c8d8d6"/>
  <path d="M0 6h26v4H0z" fill="#aab8b8"/>
  <path d="M26 4h22l8 6H26z" fill="#1c3a40"/>
  <path d="M0 10h44l18 18v60H0z" fill="#e4e6e6"/>
  <path d="M0 10h44v78H0z" fill="#d6dada"/>
  <path d="M44 10l18 18v60H44z" fill="#f6f6f6"/>
  <path d="M62 28h6v60h-6z" fill="#c8cccc"/>
  <path d="M68 20h56v68H68z" fill="#e2e4e4"/>
  <path d="M122 40l36-30v78h-36z" fill="#e6e2da"/>
  <path d="M124 44l34-22v66h-34z" fill="#f2ede4"/>
  <path d="M122 40c2-4 4-4 6-7c2 2 4 0 6-4c2 2 4 0 6-4c2 2 4 0 6-4c2 2 4 0 6-4c2 2 4 0 6-3v14l-36 22z" fill="#a8302e"/>
  <path d="M123 46l35-23v5l-35 23z" fill="#f6f6f6"/>
  <path d="M124 54l34-22v3l-34 22z" fill="#b84a44"/>
  <path d="M130 62v26M138 56v32M146 50v38M154 44v44" stroke="#ddd4c4" stroke-width="1.6"/>
  <path d="M48 88c4-10 14-14 34-14s30 4 36 14z" fill="#e0302a"/>
  <ellipse cx="83" cy="51" rx="14" ry="17" fill="#dcb49c"/>
  <path d="M68 45c0-10 7-14 15-14s15 4 15 12c-4-3-9-4-15-4s-11 2-15 6z" fill="#2a2424"/>
  <path d="M71 49h9v5h-9zM86 49h9v5h-9z" stroke="#5a4a5a" stroke-width="1.1" fill="none"/>
  <path d="M77 68h11v20H77z" fill="#3a2222"/>
 </svg>
</div>
<div class="a" style="left:1097px;top:122px;width:85px;height:22px;background:rgba(20,20,20,.82)"></div>
<svg style="left:1102px;top:125px" width="14" height="16"><path d="M4 1a3 3 0 0 1 6 0v6a3 3 0 0 1-6 0z" fill="#4cc860"/><path d="M4 4h6v3a3 3 0 0 1-6 0z" fill="#e8f4e8"/><path d="M1.5 6a5.5 5.5 0 0 0 11 0M7 11.5v3" stroke="#f0f0f0" stroke-width="1.5" fill="none"/></svg>
<div class="labt" style="left:1121px;top:128px">延飞宇-机制</div>

<div class="tile" style="left:1096px;top:155px"></div>
<div class="tile" style="left:1096px;top:255px"></div>
<div class="tile" style="left:1096px;top:355px"></div>
<div class="tile" style="left:1096px;top:455px"></div>
<div class="tile" style="left:1096px;top:555px"></div>
<!-- avatars -->
<svg style="left:1151px;top:168px" width="52" height="52"><circle cx="26" cy="26" r="25" fill="#1e2836"/><path d="M6 40c8-4 32-4 40 0" stroke="#3a6aa0" stroke-width="2" fill="none"/><path d="M12 44c2-6 8-8 14-7c6 0 10 2 10 5c-2 4-8 6-14 6c-4 0-8-1-10-4z" fill="#e8b8a0"/><path d="M22 40h8v5h-8z" fill="#7a4a3a"/></svg>
<svg style="left:1151px;top:267px" width="52" height="52">
 <defs><clipPath id="av3"><circle cx="26" cy="26" r="25"/></clipPath></defs>
 <g clip-path="url(#av3)"><rect width="52" height="52" fill="#cfc6bc"/><rect y="0" width="52" height="12" fill="#9a9088"/><path d="M40 4l8 10l-6 10z" fill="#e0dcd8"/>
 <ellipse cx="24" cy="24" rx="9" ry="10" fill="#ecd4c4"/><path d="M14 22c0-10 18-12 20-2c4 2 6 8 2 12c-2-8-4-10-8-10c-4 0-10 0-14 0z" fill="#2c2420"/>
 <path d="M10 52c0-12 8-18 16-18s16 6 18 18z" fill="#ddd"/><path d="M12 40h30M11 44h32M10 48h34" stroke="#555" stroke-width="1.6"/>
 <path d="M4 30l6-16l4 2l-4 18z" fill="#e8e0d8"/></g>
</svg>
<svg style="left:1151px;top:367px" width="52" height="52">
 <circle cx="26" cy="26" r="25" fill="#f2cf28"/>
 <path d="M15 16l6 8M37 16l-6 8" stroke="#c8a020" stroke-width="3"/>
 <circle cx="26" cy="16" r="5" fill="#f0d050" stroke="#9a8020" stroke-width=".8"/>
 <path d="M18 34l3-10h10l3 10z" fill="#fafafa"/><path d="M17 34h18" stroke="#bbb"/>
 <text x="26" y="41" font-size="5" fill="#8a7020" text-anchor="middle" font-family="Liberation Sans">Simpson</text>
</svg>
<svg style="left:1151px;top:467px" width="52" height="52"><circle cx="26" cy="26" r="25" fill="#1b74f2"/></svg>
<div class="t" style="left:1159px;top:482px;font-size:18px;color:#fff">金玉</div>
<svg style="left:1151px;top:566px" width="52" height="52">
 <defs><clipPath id="av6"><circle cx="26" cy="26" r="25"/></clipPath></defs>
 <g clip-path="url(#av6)"><rect width="52" height="52" fill="#f6dce8"/>
 <text x="27" y="12" font-size="8" fill="#e83a8a" text-anchor="middle" font-weight="bold">好运连来</text>
 <ellipse cx="25" cy="26" rx="13" ry="12" fill="#f4e4dc"/><ellipse cx="22" cy="24" rx="7" ry="6" fill="#e8cfc4"/>
 <path d="M38 16l12 6l-3 12l-8-3z" fill="#1e1e1e"/><path d="M3 28l8-5l3 12l-8 5z" fill="#1e1e1e"/>
 <path d="M18 36h16l6 16H12z" fill="#9cc8ea"/><circle cx="27" cy="36" r="5" fill="#fafafa"/><circle cx="10" cy="44" r="4" fill="#fff"/><circle cx="44" cy="10" r="3" fill="#222"/></g>
</svg>
<!-- labels -->
<div class="a" style="left:1097px;top:222px;width:80px;height:22px;background:rgba(8,8,8,.92)"></div>
<div class="a" style="left:1097px;top:322px;width:21px;height:22px;background:#f07f22"></div>
<svg style="left:1099px;top:324px" width="17" height="18"><circle cx="8.5" cy="6" r="3.5" fill="#fff"/><path d="M2 16c0-5 3-7 6.5-7s6.5 2 6.5 7z" fill="#fff"/></svg>
<div class="a" style="left:1118px;top:322px;width:82px;height:22px;background:rgba(8,8,8,.92)"></div>
<div class="a" style="left:1097px;top:422px;width:39px;height:22px;background:rgba(8,8,8,.92)"></div>
<div class="a" style="left:1097px;top:522px;width:59px;height:22px;background:rgba(8,8,8,.92)"></div>
<div class="a" style="left:1097px;top:621px;width:64px;height:22px;background:rgba(8,8,8,.92)"></div>
<svg style="left:0;top:0" width="1267" height="729">
 <defs>
  <g id="mute"><path d="M4 1a3 3 0 0 1 6 0v6a3 3 0 0 1-6 0z" fill="#f0f0f0"/><path d="M1.5 6a5.5 5.5 0 0 0 11 0M7 11.5v3" stroke="#f0f0f0" stroke-width="1.4" fill="none"/><path d="M12 1L1 14" stroke="#c83030" stroke-width="1.8"/></g>
 </defs>
 <use href="#mute" x="1102" y="226"/>
 <use href="#mute" x="1125" y="326"/>
 <use href="#mute" x="1102" y="426"/>
 <use href="#mute" x="1102" y="526"/>
 <use href="#mute" x="1102" y="625"/>
</svg>
<div class="labt" style="left:1121px;top:228px">教学信息员</div>
<div class="labt" style="left:1143px;top:328px">教学信息员</div>
<div class="labt" style="left:1121px;top:428px">卢</div>
<div class="labt" style="left:1121px;top:528px">赵金玉</div>
<div class="labt" style="left:1121px;top:627px">机械-教</div>
<!-- scrollbar -->
<div class="a" style="left:1259px;top:422px;width:7px;height:68px;background:#3a4048;border-radius:2px"></div>
<div class="a" style="left:1261px;top:455px;width:3px;height:30px;background:repeating-linear-gradient(180deg,#7aa880 0,#7aa880 1px,transparent 1px,transparent 3px)"></div>
<!-- speaking overlay -->
<div class="a" style="left:990px;top:169px;width:241px;height:36px;background:rgba(36,38,41,.985);border-radius:3px"></div>
<svg style="left:1000px;top:180px" width="16" height="16"><path d="M5 2a3 3 0 0 1 6 0v6a3 3 0 0 1-6 0z" fill="#c8b8b8"/><path d="M2.5 7a5.5 5.5 0 0 0 11 0M8 12.5v2" stroke="#b8a8a8" stroke-width="1.3" fill="none"/><path d="M13 2L2 15" stroke="#c83030" stroke-width="1.6"/></svg>
<div class="a" style="left:1025px;top:177px;width:1px;height:21px;background:#3c3e42"></div>
<div class="t" style="left:1034px;top:182px;font-size:11.6px;color:#f2f2f2;font-weight:500">正在讲话: 延飞宇-机制;</div>
<svg style="left:1170px;top:175px" width="48" height="26"><path d="M6 19L15 7L25 18L33 9L42 19" stroke="#4c4e52" stroke-width="8" stroke-linecap="round" stroke-linejoin="round" fill="none"/></svg>
<!-- main taskbar -->
<svg style="left:21px;top:686px" width="20" height="20"><defs><radialGradient id="sun" cx=".35" cy=".35" r=".7"><stop offset="0" stop-color="#ffe070"/><stop offset=".6" stop-color="#ffb820"/><stop offset="1" stop-color="#f59010"/></radialGradient></defs><circle cx="10" cy="10" r="9" fill="url(#sun)"/></svg>
<div class="t" style="left:50px;top:682px;font-size:11.5px;color:#333">17°C</div>
<div class="t" style="left:50px;top:697px;font-size:11.5px;color:#555">晴朗</div>
<div class="a" style="left:811px;top:677px;width:35px;height:39px;background:rgba(255,255,255,.55);border-radius:4px"></div>
<svg style="left:0;top:669px" width="1267" height="49">
 <g transform="translate(0,-669)">
 <defs><linearGradient id="wg" x1="0" y1="0" x2="1" y2="1"><stop offset="0" stop-color="#2ab0f0"/><stop offset="1" stop-color="#0a78d8"/></linearGradient></defs>
 <rect x="426" y="683" width="11" height="11" fill="url(#wg)"/><rect x="438" y="683" width="11" height="11" fill="url(#wg)"/><rect x="426" y="695" width="11" height="11" fill="url(#wg)"/><rect x="438" y="695" width="11" height="11" fill="url(#wg)"/>
 <circle cx="483" cy="691" r="7" stroke="#1a1a1a" stroke-width="2.4" fill="none"/><path d="M478 696l-5.5 6" stroke="#1a1a1a" stroke-width="2.8" stroke-linecap="round"/>
 <rect x="518" y="684" width="13" height="13" fill="#c8c8c8"/><rect x="514" y="690" width="10" height="14" fill="#1a1a1a"/><rect x="514" y="697" width="15" height="7" fill="#1a1a1a"/><rect x="524" y="690" width="6" height="6" fill="#e0e0e0"/>
 <path d="M557 684h9l2 3h12v18h-23z" fill="#f0b820"/><rect x="557" y="692" width="23" height="13" fill="#fbd250"/><rect x="562" y="698" width="13" height="6" fill="#1f70c8"/>
 <path d="M600 689l12-8l12 8v14h-24z" fill="#1f8ee0"/><path d="M600 689l12 9l12-9" fill="#5ec0f8"/><path d="M600 703l9-8M624 703l-9-8" stroke="#3aa8f0" stroke-width="1"/>
 <circle cx="655" cy="694" r="11" fill="#1e7ee0"/><path d="M657 686l-6 9h4l-2 7l6-9h-4z" fill="#fff"/>
 <rect x="688" y="682" width="23" height="23" fill="#5a4ad8"/><path d="M692 702l7-14M697 702l7-14M702 702l6-14v14" stroke="#fff" stroke-width="2" fill="none"/>
 <defs><linearGradient id="edg" x1="0" y1="1" x2="1" y2="0"><stop offset="0" stop-color="#0c59a8"/><stop offset=".55" stop-color="#1a8ad8"/><stop offset="1" stop-color="#48d08a"/></linearGradient></defs>
 <circle cx="742.5" cy="694" r="11" fill="url(#edg)"/>
 <path d="M736 696c0-4 3-7 7-7c3 0 6 2 6 5c0 1-1 2-3 2h-4c0 3 3 5 7 4c-2 2-4 3-6 3c-4 0-7-3-7-7z" fill="#e8f4fc" opacity=".85"/>
 <path d="M740 694c.5-2 2-3 3.5-3c1.5 0 3 1 3 2.5h-6.5z" fill="#1a8ad8"/>
 <rect x="740" y="711" width="6" height="2" rx="1" fill="#666"/>
 <rect x="775" y="683" width="21" height="22" rx="4" fill="#1a80e8"/><path d="M781 688l9 6l-4 2l2 5l-3 1l-2-5l-3 3z" fill="#fff"/>
 <rect x="818" y="683" width="22" height="22" rx="4" fill="#1a73e8"/><path d="M821 699l5-7l4 4l5-6l4 9z" fill="#fff"/><path d="M826 699l4-4l5 4" fill="#1a73e8"/>
 <rect x="822" y="711" width="14" height="3" rx="1.5" fill="#1a73e8"/>
 <path d="M905 696l5-5l5 5" stroke="#222" stroke-width="1.3" fill="none"/>
 <path d="M927 688c4 0 7-2 8-3c1 1 4 3 8 3v6c0 6-5 9-8 10c-3-1-8-4-8-10z" fill="#3a8ae8"/><path d="M929 690c3 0 5-1 6-2c1 1 3 2 6 2v4c0 4-3 7-6 8c-3-1-6-4-6-8z" fill="#c8e4f8"/><circle cx="940" cy="700" r="4" fill="#40c040"/>
 <path d="M951 692a7 7 0 0 1 12-2M965 696a7 7 0 0 1-12 2" stroke="#444" stroke-width="1.5" fill="none"/><path d="M961 687l3 3l-4 1z" fill="#444"/><circle cx="962" cy="701" r="4" fill="#f08020"/>
 <rect x="977" y="689" width="17" height="11" rx="1.5" stroke="#444" stroke-width="1.3" fill="none"/><path d="M980 692h1M983 692h1M986 692h1M989 692h1M980 695h1M983 695h1M986 695h1M989 695h1M982 698h7" stroke="#444" stroke-width="1"/>
 <path d="M1013 686a3.5 3.5 0 0 1 7 0v8a3.5 3.5 0 0 1-7 0z" stroke="#2a6ac8" stroke-width="1.5" fill="none"/><path d="M1010 693a6.5 6.5 0 0 0 13 0M1016.5 700v4" stroke="#2a6ac8" stroke-width="1.5" fill="none"/>
 <path d="M1116 692a11 11 0 0 1 15 0M1119 695a7 7 0 0 1 9 0M1121.5 698a3 3 0 0 1 4 0" stroke="#1a1a1a" stroke-width="1.5" fill="none"/><circle cx="1123.5" cy="701" r="1.3" fill="#1a1a1a"/>
 <path d="M1139 691h3l4-4v14l-4-4h-3z" stroke="#222" stroke-width="1.2" fill="none"/><path d="M1149 690a5 5 0 0 1 0 8M1151 688a8 8 0 0 1 0 12" stroke="#222" stroke-width="1.1" fill="none"/>
 <rect x="1166" y="692" width="11" height="8" fill="#1a1a1a"/><rect x="1177" y="694" width="2" height="4" fill="#1a1a1a"/><path d="M1162 688v4h4" stroke="#1a1a1a" stroke-width="1.5" fill="none"/>
 </g>
</svg>
<div class="t" style="left:1041px;top:686px;font-size:14px;color:#222">中</div>
<div class="t" style="left:1079px;top:686px;font-size:14px;color:#222">拼</div>
<div class="t" style="left:1219px;top:681px;font-size:11.5px;color:#222">13:58</div>
<div class="t" style="left:1194px;top:696px;font-size:11.5px;color:#222">2022/5/14</div>
</body></html>
